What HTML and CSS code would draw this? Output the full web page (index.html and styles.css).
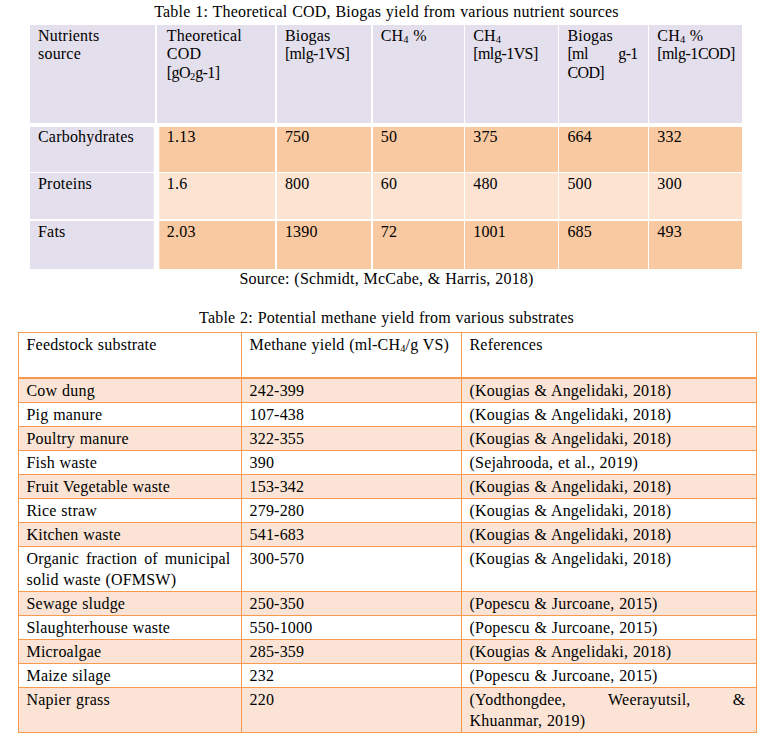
FILE: index.html
```html
<!DOCTYPE html>
<html>
<head>
<meta charset="utf-8">
<link rel="stylesheet" href="styles.css">
</head>
<body>
<div class="page">
  <div class="caption cap1">Table 1: Theoretical COD, Biogas yield from various nutrient sources</div>
  <div class="t1">
    <div class="t1-head">
      <div class="c">Nutrients<br>source</div>
      <div class="c c2">Theoretical<br>COD<br><span class="cond">[gO<sub class="s">2</sub>g-1]</span></div>
      <div class="c">Biogas<br><span class="cond">[ml g-1 VS]</span></div>
      <div class="c">CH<sub class="s">4</sub> %</div>
      <div class="c">CH<sub class="s">4</sub><br><span class="cond">[ml g-1 VS]</span></div>
      <div class="c c6">Biogas<div class="jl cond">[ml g-1</div><span class="cond">COD]</span></div>
      <div class="c">CH<sub class="s">4</sub> %<br><span class="cond">[ml g-1 COD]</span></div>
    </div>
    <div class="t1-body">
      <div class="t1-row r1 strong">
        <div class="c first">Carbohydrates</div>
        <div class="c c2">1.13</div>
        <div class="c">750</div>
        <div class="c">50</div>
        <div class="c">375</div>
        <div class="c">664</div>
        <div class="c">332</div>
      </div>
      <div class="t1-row r2 light">
        <div class="c first">Proteins</div>
        <div class="c c2">1.6</div>
        <div class="c">800</div>
        <div class="c">60</div>
        <div class="c">480</div>
        <div class="c">500</div>
        <div class="c">300</div>
      </div>
      <div class="t1-row r3 strong">
        <div class="c first">Fats</div>
        <div class="c c2">2.03</div>
        <div class="c">1390</div>
        <div class="c">72</div>
        <div class="c">1001</div>
        <div class="c">685</div>
        <div class="c">493</div>
      </div>
    </div>
  </div>
  <div class="caption source">Source: (Schmidt, McCabe, &amp; Harris, 2018)</div>

  <div class="caption cap2">Table 2: Potential methane yield from various substrates</div>
  <table class="t2">
    <colgroup><col class="w1"><col class="w2"><col class="w3"></colgroup>
    <tr class="head"><td>Feedstock substrate</td><td>Methane yield (ml-CH<sub class="s">4</sub>/g VS)</td><td>References</td></tr>
    <tr class="odd"><td>Cow dung</td><td>242-399</td><td>(Kougias &amp; Angelidaki, 2018)</td></tr>
    <tr><td>Pig manure</td><td>107-438</td><td>(Kougias &amp; Angelidaki, 2018)</td></tr>
    <tr class="odd"><td>Poultry manure</td><td>322-355</td><td>(Kougias &amp; Angelidaki, 2018)</td></tr>
    <tr><td>Fish waste</td><td>390</td><td>(Sejahrooda, et al., 2019)</td></tr>
    <tr class="odd"><td>Fruit Vegetable waste</td><td>153-342</td><td>(Kougias &amp; Angelidaki, 2018)</td></tr>
    <tr><td>Rice straw</td><td>279-280</td><td>(Kougias &amp; Angelidaki, 2018)</td></tr>
    <tr class="odd"><td>Kitchen waste</td><td>541-683</td><td>(Kougias &amp; Angelidaki, 2018)</td></tr>
    <tr><td><div class="jl">Organic fraction of municipal</div><div>solid waste (OFMSW)</div></td><td>300-570</td><td>(Kougias &amp; Angelidaki, 2018)</td></tr>
    <tr class="odd"><td>Sewage sludge</td><td>250-350</td><td>(Popescu &amp; Jurcoane, 2015)</td></tr>
    <tr><td>Slaughterhouse waste</td><td>550-1000</td><td>(Popescu &amp; Jurcoane, 2015)</td></tr>
    <tr class="odd"><td>Microalgae</td><td>285-359</td><td>(Kougias &amp; Angelidaki, 2018)</td></tr>
    <tr><td>Maize silage</td><td>232</td><td>(Popescu &amp; Jurcoane, 2015)</td></tr>
    <tr class="odd"><td>Napier grass</td><td>220</td><td><div class="jl">(Yodthongdee, Weerayutsil, &amp;</div><div>Khuanmar, 2019)</div></td></tr>
  </table>
</div>
</body>
</html>
```

FILE: styles.css
```css
html, body {
  margin: 0;
  padding: 0;
  background: #ffffff;
}
body {
  font-family: "Liberation Serif", "Times New Roman", serif;
  font-size: 16px;
  line-height: 18.4px;
  letter-spacing: 0.2px;
  word-spacing: 0.5px;
  color: #000000;
}
.page {
  width: 773px;
}
.caption {
  text-align: center;
  line-height: 18.4px;
}
.cap1 {
  padding-top: 3px;
  margin-bottom: 3.6px;
}
.source {
  margin-top: 1.6px;
}
.cap2 {
  margin-top: 20.3px;
  margin-bottom: 4.3px;
}
.s {
  font-size: 10.5px;
  line-height: 0;
  vertical-align: -2px;
  letter-spacing: 0;
}
.cond {
  letter-spacing: -0.6px;
  word-spacing: -3px;
  white-space: nowrap;
}
.jl {
  text-align: justify;
  text-align-last: justify;
}

/* Table 1 */
.t1 {
  margin-left: 30px;
  width: 711.7px;
  display: flex;
  flex-direction: column;
  gap: 4px;
}
.t1-head,
.t1-row {
  display: grid;
  grid-template-columns: 125.3px 118.6px 94.3px 91px 92.7px 88.4px 92.4px;
  column-gap: 1.5px;
}
.t1-head {
  height: 98.3px;
}
.t1-head .c {
  background: #e4dfec;
}
.t1 .c {
  padding: 2px 8px 0 8px;
  box-sizing: border-box;
}
.t1 .c2 {
  padding-left: 10px;
}
.t1 .c6 {
  padding-right: 10px;
}
.t1 .c6 .cond {
  white-space: normal;
}
.t1-body {
  display: flex;
  flex-direction: column;
  gap: 1.5px;
}
.r1 { height: 44.4px; }
.r1 .c { padding-top: 0.5px; }
.r2 { height: 46px; }
.r3 { height: 48px; }
.t1-row .first {
  background: #e4dfec;
  box-shadow: inset -1.3px 0 0 #ffffff;
}
.strong .c:not(.first) {
  background: #f9c9a1;
}
.light .c:not(.first) {
  background: #fce3d2;
}
.t1-row .c2 {
  box-shadow: inset 2.3px 0 0 #ffffff;
}

/* Table 2 */
.t2 {
  border-collapse: collapse;
  table-layout: fixed;
  width: 738px;
  margin-left: 17.5px;
}
.w1 { width: 223px; }
.w2 { width: 220px; }
.w3 { width: 295px; }
.t2 td {
  border: 1px solid #f59a4e;
  padding: 1px 10px 1px 8px;
  line-height: 21px;
  vertical-align: top;
}
.t2 .head td {
  height: 42px;
  border-bottom-width: 2.5px;
  padding-top: 1px;
}
.t2 .odd td {
  background: #fbe4d5;
}
```
